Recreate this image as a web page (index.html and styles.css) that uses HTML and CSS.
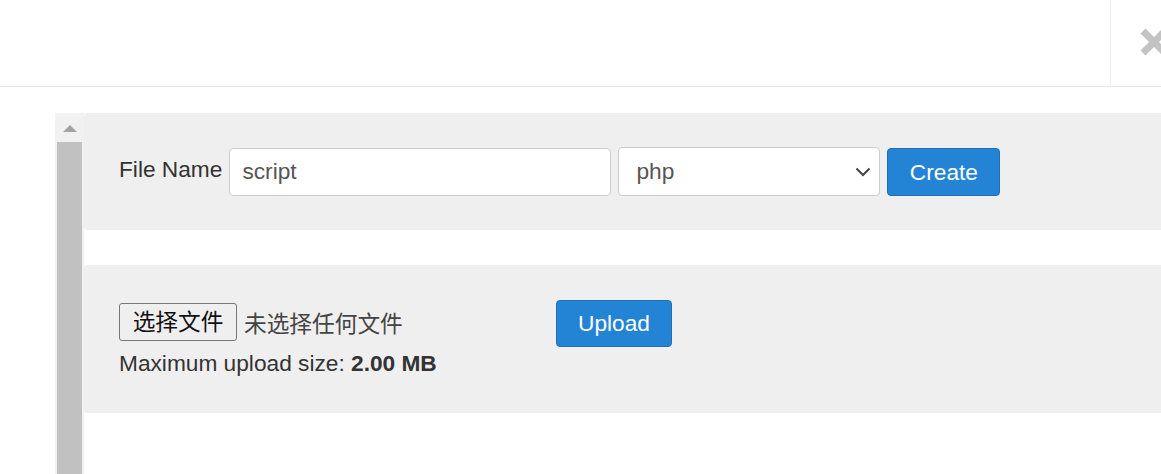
FILE: index.html
```html
<!DOCTYPE html>
<html>
<head>
<meta charset="utf-8">
<link rel="stylesheet" href="styles.css">
</head>
<body>
<div class="page">
  <header class="header">
    <div class="header-title"></div>
    <div class="close-col">
      <svg class="close-icon" width="34" height="28" viewBox="0 0 34 28">
        <path d="M3 3 L25 25 M25 3 L3 25" stroke="#c3c3c3" stroke-width="7" fill="none"/>
      </svg>
    </div>
  </header>
  <main class="main">
    <div class="scrollbar">
      <div class="scroll-arrow"></div>
      <div class="scroll-thumb"></div>
    </div>
    <div class="content">
      <section class="panel panel-create">
        <label class="label">File Name</label>
        <div class="text-input">script</div>
        <div class="select">
          <span>php</span>
          <svg class="chev" width="16" height="10" viewBox="0 0 16 10"><path d="M1.5 1.5 L8 8 L14.5 1.5" stroke="#444" stroke-width="2" fill="none"/></svg>
        </div>
        <button class="btn">Create</button>
      </section>
      <section class="panel panel-upload">
        <div class="upload-row">
          <div class="file-input">
            <span class="file-btn">选择文件</span>
            <span class="file-none">未选择任何文件</span>
          </div>
          <button class="btn btn-upload">Upload</button>
        </div>
        <div class="max-size">Maximum upload size: <b>2.00 MB</b></div>
      </section>
    </div>
  </main>
</div>
</body>
</html>
```
FILE: styles.css
```css
html, body {
  margin: 0;
  padding: 0;
  background: #fff;
  overflow: hidden;
}
body {
  font-family: "Liberation Sans", Arial, "Noto Sans CJK SC", sans-serif;
  color: #333;
  width: 1161px;
  height: 474px;
}
.page {
  width: 1161px;
  height: 474px;
  overflow: hidden;
}
.header {
  display: flex;
  height: 86px;
  border-bottom: 1px solid #e8e8e8;
}
.header-title {
  flex: 0 0 1110px;
}
.close-col {
  flex: 0 0 auto;
  width: 60px;
  border-left: 1px solid #eeeeee;
  padding-left: 29px;
  padding-top: 28px;
  box-sizing: border-box;
}
.close-icon {
  display: block;
}
.main {
  display: flex;
  padding-top: 26px;
  padding-left: 55px;
}
.scrollbar {
  flex: 0 0 29px;
  height: 400px;
  background: #f1f1f1;
  display: flex;
  flex-direction: column;
  align-items: center;
}
.scroll-arrow {
  margin-top: 12px;
  width: 0;
  height: 0;
  border-left: 7px solid transparent;
  border-right: 7px solid transparent;
  border-bottom: 7px solid #a3a3a3;
}
.scroll-thumb {
  margin-top: 10px;
  width: 25px;
  flex: 1;
  background: #c1c1c1;
  align-self: flex-start;
  margin-left: 2px;
}
.content {
  flex: 0 0 1200px;
  display: flex;
  flex-direction: column;
  gap: 35px;
}
.panel {
  background: #efefef;
  border-radius: 4px 0 0 4px;
  box-sizing: border-box;
}
.panel-create {
  height: 117px;
  padding: 35px 0 0 35px;
  display: flex;
  align-items: flex-start;
}
.label {
  font-size: 22.7px;
  margin-top: 8px;
  margin-right: 7px;
}
.text-input {
  width: 382px;
  height: 48px;
  box-sizing: border-box;
  background: #fff;
  border: 1px solid #cccccc;
  border-radius: 4px;
  padding-left: 12px;
  font-size: 22.7px;
  line-height: 45px;
  color: #555;
}
.select {
  margin-left: 7px;
  margin-top: -1px;
  width: 262px;
  height: 49px;
  box-sizing: border-box;
  background: #fff;
  border: 1px solid #cccccc;
  border-radius: 4px;
  padding: 0 8px 0 17px;
  font-size: 22.7px;
  color: #555;
  display: flex;
  align-items: center;
  justify-content: space-between;
}
.chev {
  display: block;
  margin-top: 1px;
}
.btn {
  font-family: "Liberation Sans", Arial, sans-serif;
  margin-left: 7px;
  width: 113px;
  height: 48px;
  background: #2384d6;
  border: 1px solid #1e6fb6;
  border-radius: 4px;
  color: #fff;
  font-size: 22.7px;
  padding: 0;
}
.panel-upload {
  height: 148px;
  padding: 35px 0 0 35px;
}
.upload-row {
  display: flex;
  align-items: flex-start;
}
.file-input {
  width: 437px;
  margin-top: 3px;
  display: flex;
  align-items: center;
  font-size: 22.7px;
}
.file-btn {
  display: block;
  width: 118px;
  height: 38px;
  box-sizing: border-box;
  border: 1px solid #777;
  border-radius: 3px;
  background: #efefef;
  text-align: center;
  line-height: 36px;
  color: #111;
}
.file-none {
  margin-left: 7px;
  color: #444;
}
.btn-upload {
  margin-left: 0;
  width: 116px;
  height: 47px;
}
.max-size {
  font-size: 22.7px;
  margin-top: 3px;
  color: #333;
}
.max-size b {
  font-weight: bold;
}
```
